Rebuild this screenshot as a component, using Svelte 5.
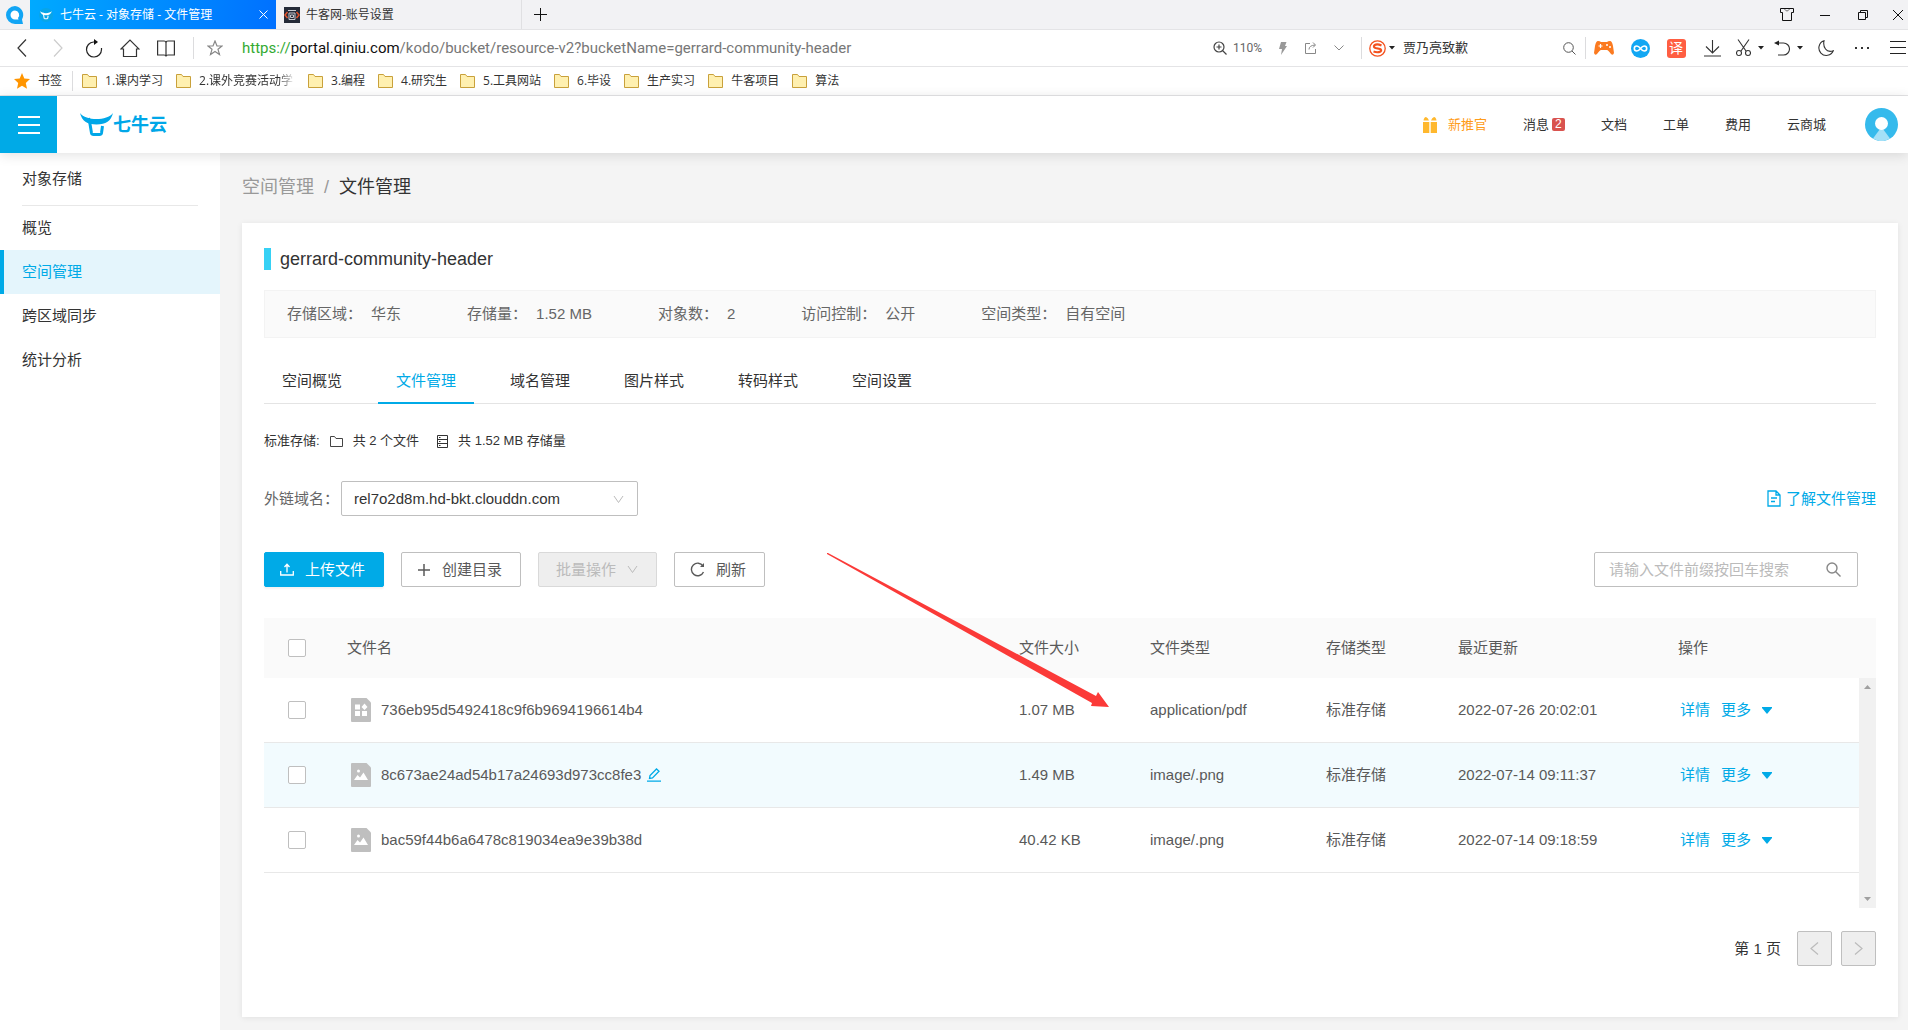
<script lang="ts">
  type StoredFile = {
    name : string
    size : string
    mime : string
    storage : string
    updated : string
    kind : "app" | "image"
    hovered? : boolean
  }


  const bookmarks = [
    "1.课内学习",
    "2.课外竞赛活动学",
    "3.编程",
    "4.研究生",
    "5.工具网站",
    "6.毕设",
    "生产实习",
    "牛客项目",
    "算法",
  ]

  const menu = ["概览", "空间管理", "跨区域同步", "统计分析"]

  const facts = [
    { label: "存储区域：", value: "华东" },
    { label: "存储量：", value: "1.52 MB" },
    { label: "对象数：", value: "2" },
    { label: "访问控制：", value: "公开" },
    { label: "空间类型：", value: "自有空间" },
  ]

  const tabs = ["空间概览", "文件管理", "域名管理", "图片样式", "转码样式", "空间设置"]

  const files : StoredFile[] = [
    { name: "736eb95d5492418c9f6b9694196614b4", size: "1.07 MB", mime: "application/pdf", storage: "标准存储", updated: "2022-07-26 20:02:01", kind: "app" },
    { name: "8c673ae24ad54b17a24693d973cc8fe3", size: "1.49 MB", mime: "image/.png", storage: "标准存储", updated: "2022-07-14 09:11:37", kind: "image", hovered: true },
    { name: "bac59f44b6a6478c819034ea9e39b38d", size: "40.42 KB", mime: "image/.png", storage: "标准存储", updated: "2022-07-14 09:18:59", kind: "image" },
  ]


  let active_menu = "空间管理"

  let active_tab = "文件管理"

  let selected : string[] = []

  let keyword = "贾乃亮致歉"

  let prefix = ""

  $: all_selected = selected.length === files.length


  function toggle_all() : void {
    selected = all_selected ? [] : files.map(f => f.name)
  }
</script>


{#snippet bull()}
  <path d="M0 0C6 8 27 8 33 0C31 8 26 11.500 16.500 11.500S2 8 0 0z" fill="currentColor" />
  <path d="M8.500 5l1.500 6 1.500 9q.3 1.500 2 1.500h6q1.700 0 2-1.500l1-7" fill="none" stroke="currentColor" stroke-width="3" />
{/snippet}

{#snippet caret()}
  <svg class="caret" width="6" height="4" viewBox="0 0 6 4"><path d="M0 0h6L3 3.500z" fill="#222" /></svg>
{/snippet}

{#snippet chevron()}
  <svg width="11" height="9" viewBox="0 0 11 9" fill="none" stroke="currentColor"><path d="M1 1l4.500 6.500L10 1" /></svg>
{/snippet}

{#snippet columns()}
  <colgroup>
    <col class="col-check" />
    <col />
    <col class="col-size" />
    <col class="col-mime" />
    <col class="col-storage" />
    <col class="col-updated" />
    <col class="col-actions" />
  </colgroup>
{/snippet}


<div class="window">
  <div class="tabstrip">
    <span class="browser-logo">
      <svg width="18" height="18" viewBox="0 0 18 18">
        <path d="M9 0a9 9 0 1 0 0 18h8l-1-4.500A9 9 0 0 0 9 0z" fill="#12a5f4" />
        <path d="M9 4.500a4.500 4.500 0 1 0 0 9h3.500l-.5-1.500A4.500 4.500 0 0 0 9 4.500z" fill="#fff" />
      </svg>
    </span>
    <div class="page-tab current">
      <svg width="14" height="14" viewBox="0 0 14 14">
        <circle cx="7" cy="7" r="7" fill="#08a5e8" />
        <g transform="translate(1 3) scale(.36)">{@render bull()}</g>
      </svg>
      <span>七牛云 - 对象存储 - 文件管理</span>
      <button aria-label="关闭标签页">
        <svg width="9" height="9" viewBox="0 0 9 9" stroke="#fff"><path d="M.5.5l8 8M8.500.5l-8 8" /></svg>
      </button>
    </div>
    <div class="page-tab">
      <svg width="16" height="16" viewBox="0 0 16 16" fill="none">
        <path d="M0 0h16v16H0z" fill="#252b38" />
        <path d="M4 3.500h8M5 6h6v6.500H5zM6.500 8h3v2.500h-3z" stroke="#c9cbd0" />
        <path d="M3.500 5L1 8l2.500 3M12.500 5L15 8l-2.500 3" stroke="#e2532c" stroke-width="1.500" />
      </svg>
      <span>牛客网-账号设置</span>
    </div>
    <button class="new-tab" aria-label="新建标签页">
      <svg width="13" height="13" viewBox="0 0 13 13" stroke="#111"><path d="M0 6.500h13M6.500 0v13" /></svg>
    </button>
    <div class="window-controls">
      <button aria-label="皮肤">
        <svg width="14" height="13" viewBox="0 0 14 13" fill="none" stroke="#111">
          <path d="M.5.5h13v4h-2v8h-9v-8h-2z" /><path d="M4.500 1q2.500 4 5 0" stroke="#777" />
        </svg>
      </button>
      <button aria-label="最小化">
        <svg width="10" height="10" viewBox="0 0 10 10" stroke="#111"><path d="M0 5.500h10" /></svg>
      </button>
      <button aria-label="还原">
        <svg width="10" height="10" viewBox="0 0 10 10" fill="none" stroke="#111"><path d="M.5 2.500h7v7h-7zM2.500 2.500v-2h7v7h-2" /></svg>
      </button>
      <button aria-label="关闭窗口">
        <svg width="10" height="10" viewBox="0 0 10 10" stroke="#111"><path d="M0 0l10 10M10 0L0 10" /></svg>
      </button>
    </div>
  </div>

  <div class="addressbar">
    <div class="nav-buttons">
      <button aria-label="后退">
        <svg width="10" height="18" viewBox="0 0 10 18" fill="none" stroke="#333" stroke-width="1.200"><path d="M9 .5L1 9l8 8.500" /></svg>
      </button>
      <button aria-label="前进">
        <svg width="10" height="18" viewBox="0 0 10 18" fill="none" stroke="#ccc" stroke-width="1.200"><path d="M1 .5L9 9l-8 8.500" /></svg>
      </button>
      <button aria-label="刷新页面">
        <svg width="18" height="19" viewBox="0 0 18 19" fill="none" stroke="#222" stroke-width="1.200">
          <path d="M10 3H8.500a7.500 7.500 0 1 0 8 7.500V9" /><path d="M9 0l4 3-4 3z" fill="#111" stroke="none" />
        </svg>
      </button>
      <button aria-label="主页">
        <svg width="20" height="18" viewBox="0 0 20 18" fill="none" stroke="#333" stroke-width="1.200"><path d="M1 10l9-9 9 9h-2.500v7.500h-13V10z" /></svg>
      </button>
      <button aria-label="阅读">
        <svg width="18" height="17" viewBox="0 0 18 17" fill="none" stroke="#333" stroke-width="1.200"><path d="M.6 1H7q2 0 2 2 0-2 2-2h6.400v14H11q-2 0-2 1.500 0-1.500-2-1.500H.6zM9 3v13" /></svg>
      </button>
    </div>
    <i class="rule"></i>
    <button class="favorite" aria-label="收藏">
      <svg width="16" height="16" viewBox="0 0 16 16" fill="none" stroke="#888" stroke-width="1.200"><path d="M8 1l2 5h5l-4 3.300 1.500 5.200L8 11.500l-4.500 3L5 9.300 1 6h5z" /></svg>
    </button>
    <div class="url" role="textbox" tabindex="0" contenteditable="true" aria-label="地址"><span class="scheme">https://</span><span class="host">portal.qiniu.com</span>/kodo/bucket/resource-v2?bucketName=gerrard-community-header</div>
    <button class="zoom">
      <svg width="14" height="14" viewBox="0 0 14 14" fill="none" stroke="#444" stroke-width="1.200"><circle cx="6" cy="6" r="5" /><path d="M9.500 9.500l4 4M3.500 6h5M6 3.500v5" /></svg>
      110%
    </button>
    <div class="page-actions">
      <button aria-label="极速模式">
        <svg width="8" height="13" viewBox="0 0 8 13"><path d="M2 0h5.500L6 4h2L2 13l1-6H0z" fill="#999" /></svg>
      </button>
      <button aria-label="分享">
        <svg width="12" height="12" viewBox="0 0 12 12" fill="none" stroke="#888"><path d="M5 1.500H.5v10h10V7M4 7.500q0-4 6-4.500M8 .5L10.500 3 8 5.500" /></svg>
      </button>
      <button aria-label="展开">
        <svg width="10" height="6" viewBox="0 0 10 6" fill="none" stroke="#888"><path d="M.5.5L5 5 9.500.5" /></svg>
      </button>
    </div>
    <i class="rule"></i>
    <button class="engine" aria-label="搜索引擎">
      <svg width="17" height="17" viewBox="0 0 17 17" fill="none" stroke="#f4511e"><circle cx="8.500" cy="8.500" r="7.700" stroke-width="1.300" /><path d="M12.500 5.500Q8 3.500 5.500 5.200 4 7 6.500 8L11 9q2 1 .5 2.500-3 1.500-7 0" stroke-width="2.200" /></svg>
      {@render caret()}
    </button>
    <input class="engine-query" aria-label="网页搜索" bind:value={keyword} />
    <button class="engine-go" aria-label="搜索网页">
      <svg width="13" height="13" viewBox="0 0 13 13" fill="none" stroke="#555"><circle cx="5.500" cy="5.500" r="4.800" /><path d="M9 9l3.500 3.500" /></svg>
    </button>
    <i class="rule"></i>
    <div class="extensions">
      <button aria-label="游戏">
        <svg width="20" height="14" viewBox="0 0 20 14">
          <path d="M4 0q2 0 3 1h6q1-1 3-1 2 0 3 5l1 7q-1 3-3 1-3-4-4-4H7q-1 0-4 4-2 2-3-1l1-7Q2 0 4 0z" fill="#fb7a20" />
          <path d="M6.500 3v4M4.500 5h4" stroke="#fff" stroke-width="1.200" /><circle cx="13" cy="4" r="1" fill="#fff" /><circle cx="16" cy="6" r="1" fill="#fff" />
        </svg>
      </button>
      <button aria-label="网盘">
        <svg width="19" height="19" viewBox="0 0 19 19"><circle cx="9.500" cy="9.500" r="9.500" fill="#12a7f3" /><path d="M9.500 9.500Q7.500 7 5.800 7a2.500 2.500 0 0 0 0 5Q7.500 12 9.500 9.500T13.200 7a2.500 2.500 0 0 1 0 5Q11.500 12 9.500 9.500z" fill="none" stroke="#fff" stroke-width="1.600" /></svg>
      </button>
      <button aria-label="翻译"><span class="translate">译</span></button>
      <button aria-label="下载">
        <svg width="17" height="17" viewBox="0 0 17 17" fill="none" stroke="#333" stroke-width="1.100"><path d="M8.500 0v12.500M2 6.500l6.500 6.500L15 6.500M0 16h17" /></svg>
      </button>
      <button class="wide" aria-label="截图">
        <svg width="15" height="18" viewBox="0 0 15 18" fill="none" stroke="#333" stroke-width="1.100"><path d="M2 .5l8 11.500M13 .5L5 12" /><circle cx="3" cy="14" r="2.500" /><circle cx="12" cy="14" r="2.500" /></svg>
        {@render caret()}
      </button>
      <button class="wide" aria-label="撤销">
        <svg width="16" height="16" viewBox="0 0 16 16" fill="none" stroke="#333" stroke-width="1.100"><path d="M2 3h7.500a6 6 0 0 1 0 12H4" /><path d="M0 3l5-2.500v5z" fill="#222" stroke="none" /></svg>
        {@render caret()}
      </button>
      <button aria-label="夜间模式">
        <svg width="16" height="16" viewBox="0 0 16 16" fill="none" stroke="#333" stroke-width="1.100"><path d="M6 .8a7.500 7.500 0 1 0 9.300 10Q10 12.500 7.500 9T6 .8z" /></svg>
      </button>
      <button aria-label="更多工具">
        <svg width="15" height="3" viewBox="0 0 15 3" fill="#333"><path d="M0 0h2v2H0zM6 0h2v2H6zM12 0h2v2h-2z" /></svg>
      </button>
      <button class="last" aria-label="菜单">
        <svg width="18" height="14" viewBox="0 0 18 14" stroke="#222"><path d="M0 .5h16M0 6.500h16M0 12.500h16" /></svg>
      </button>
    </div>
  </div>

  <nav class="bookmarks" aria-label="书签栏">
    <button class="bookmark-root">
      <svg width="16" height="16" viewBox="0 0 16 16" fill="#ff9500"><path d="M8 0l2.300 5.400L16 6l-4.200 3.900L13 15.700l-5-3-5 3 1.200-5.800L0 6l5.700-.6z" /></svg>
      书签
    </button>
    {#each bookmarks as bookmark (bookmark)}
      <button>
        <svg width="15" height="14" viewBox="0 0 15 14"><path d="M.5.500h5l1.500 2h7.500v11H.5z" fill="#fff0b0" stroke="#c9a13b" /></svg>
        <span class:faded={bookmark.length > 8}>{bookmark}</span>
      </button>
    {/each}
  </nav>

  <header>
    <button class="hamburger" aria-label="产品菜单">
      <svg width="22" height="20" viewBox="0 0 22 20" stroke="#fff" stroke-width="2"><path d="M0 2h22M0 10h22M0 18h22" /></svg>
    </button>
    <a class="brand" href="#home">
      <svg width="33" height="23" viewBox="0 0 33 23">{@render bull()}</svg>
      <span>七牛云</span>
    </a>
    <nav class="account" aria-label="账户">
      <a class="promo" href="#promo">
        <svg width="14" height="16" viewBox="0 0 14 16" fill="#ffb82e"><path d="M0 5h6.300v11H0zM7.700 5H14v11H7.700zM.5 3.500Q1 0 3 0q2 .5 3 3.500zM13.500 3.500Q13 0 11 0 9 .5 8 3.500z" /></svg>
        新推官
      </a>
      <a href="#messages">消息<b>2</b></a>
      <a href="#docs">文档</a>
      <a href="#tickets">工单</a>
      <a href="#billing">费用</a>
      <a href="#market">云商城</a>
      <button aria-label="个人中心">
        <svg width="33" height="33" viewBox="0 0 33 33">
          <circle cx="16.500" cy="16.500" r="16.500" fill="#35baec" />
          <path d="M16.500 19L8 30.600a16.500 16.500 0 0 0 17 0z" fill="#a4e0f7" />
          <circle cx="16.500" cy="15.500" r="6.500" fill="#fff" />
        </svg>
      </button>
    </nav>
  </header>

  <div class="console">
    <aside>
      <h2>对象存储</h2>
      <nav aria-label="对象存储">
        {#each menu as item (item)}
          <button class:active={item === active_menu} on:click={() => active_menu = item}>{item}</button>
        {/each}
      </nav>
    </aside>

    <main>
      <nav class="breadcrumb" aria-label="路径">
        <a href="#buckets">空间管理</a>
        <span>/</span>
        <strong>文件管理</strong>
      </nav>

      <section class="card">
        <h1>gerrard-community-header</h1>

        <dl class="facts">
          {#each facts as fact (fact.label)}
            <div><dt>{fact.label}</dt><dd>{fact.value}</dd></div>
          {/each}
        </dl>

        <div class="tabs" role="tablist">
          {#each tabs as tab (tab)}
            <button role="tab" aria-selected={tab === active_tab} class:active={tab === active_tab} on:click={() => active_tab = tab}>{tab}</button>
          {/each}
        </div>

        <div class="usage">
          <span>标准存储:</span>
          <svg width="13" height="11" viewBox="0 0 13 11" fill="none" stroke="#444"><path d="M.5.500h4l1.500 2h6.500v8H.5z" /></svg>
          <span class="count">共 2 个文件</span>
          <svg width="11" height="13" viewBox="0 0 11 13" fill="none" stroke="#333"><path d="M.5.500h10v12H.5zM.5 4.500h10M.5 8.500h10" /><path d="M2 2.500h1.500M2 6.500h1.500M2 10.500h1.500" /></svg>
          <span>共 1.52 MB 存储量</span>
        </div>

        <div class="domain">
          <label for="domain">外链域名：</label>
          <div class="select">
            <select id="domain">
              <option>rel7o2d8m.hd-bkt.clouddn.com</option>
            </select>
            {@render chevron()}
          </div>
          <a href="#help">
            <svg width="14" height="17" viewBox="0 0 14 17" fill="none" stroke="currentColor" stroke-width="1.300"><path d="M1 1h8l4 4v11H1zM9 1v4h4M4 8h6M4 11.500h4" /></svg>
            了解文件管理
          </a>
        </div>

        <div class="toolbar">
          <button class="primary">
            <svg width="14" height="13" viewBox="0 0 14 13" fill="none" stroke="currentColor" stroke-width="1.300"><path d="M.7 8v4h12.600V8M7 9.500v-8M4.500 4L7 1.200 9.500 4" /></svg>
            上传文件
          </button>
          <button>
            <svg class="plus" width="12" height="12" viewBox="0 0 12 12" stroke="currentColor" stroke-width="1.500"><path d="M0 6h12M6 0v12" /></svg>
            创建目录
          </button>
          <button disabled>
            批量操作
            {@render chevron()}
          </button>
          <button>
            <svg width="15" height="15" viewBox="0 0 15 15" fill="none" stroke="currentColor" stroke-width="1.400"><path d="M13 4a6.300 6.300 0 1 0 .5 6" /><path d="M14 1v4h-4z" fill="currentColor" stroke="none" /></svg>
            刷新
          </button>
          <div class="search">
            <input type="text" aria-label="文件前缀" placeholder="请输入文件前缀按回车搜索" bind:value={prefix} />
            <button aria-label="搜索">
              <svg width="15" height="15" viewBox="0 0 15 15" fill="none" stroke="#888" stroke-width="1.400"><circle cx="6" cy="6" r="5" /><path d="M9.500 9.500l5 5" /></svg>
            </button>
          </div>
        </div>

        <div class="table-head">
          <table>
            {@render columns()}
            <thead>
              <tr>
                <th><input type="checkbox" aria-label="全选" checked={all_selected} on:change={toggle_all} /></th>
                <th>文件名</th>
                <th>文件大小</th>
                <th>文件类型</th>
                <th>存储类型</th>
                <th>最近更新</th>
                <th>操作</th>
              </tr>
            </thead>
          </table>
        </div>
        <div class="table-body">
          <table>
            {@render columns()}
            <tbody>
              {#each files as file (file.name)}
                <tr class:hovered={file.hovered}>
                  <td><input type="checkbox" aria-label={file.name} value={file.name} bind:group={selected} /></td>
                  <td>
                    <div class="file">
                      <svg width="20" height="24" viewBox="0 0 20 24">
                        <path d="M1 0h14.500L20 4.500V23q0 1-1 1H1q-1 0-1-1V1q0-1 1-1z" fill="#bfbfbf" />
                        {#if file.kind === "app"}
                          <path d="M4 6.500h5v5H4zM4 13h5v5H4zM11 13h5v5h-5zM13.500 5.500L16.500 9l-3 3-3-3z" fill="#fff" />
                        {:else}
                          <path d="M3 17l3.500-5 2.500 2.500 3.500-5L17 17z" fill="#fff" /><circle cx="7.500" cy="8" r="1.500" fill="#fff" />
                        {/if}
                      </svg>
                      <span>{file.name}</span>
                      {#if file.hovered}
                        <button aria-label="重命名">
                          <svg width="14" height="14" viewBox="0 0 14 14" fill="none" stroke="#00aae7" stroke-width="1.300"><path d="M0 13.200h14M2.500 10.500l.5-3L9.500 1 12 3.200 5.500 10z" /></svg>
                        </button>
                      {/if}
                    </div>
                  </td>
                  <td>{file.size}</td>
                  <td>{file.mime}</td>
                  <td>{file.storage}</td>
                  <td>{file.updated}</td>
                  <td>
                    <div class="actions">
                      <a href="#detail">详情</a>
                      <button>
                        更多
                        <svg width="10" height="7" viewBox="0 0 10 7" fill="currentColor"><path d="M0 0h10v1L5 7 0 1z" /></svg>
                      </button>
                    </div>
                  </td>
                </tr>
              {/each}
            </tbody>
          </table>
          <div class="scrollbar">
            <svg width="7" height="4" viewBox="0 0 7 4" fill="#a0a0a0"><path d="M0 4h7L3.500 0z" /></svg>
            <svg width="7" height="4" viewBox="0 0 7 4" fill="#a0a0a0"><path d="M0 0h7L3.500 4z" /></svg>
          </div>
        </div>

        <div class="pagination">
          <span>第 1 页</span>
          <button disabled aria-label="上一页">
            <svg width="9" height="13" viewBox="0 0 9 13" fill="none" stroke="currentColor" stroke-width="1.200"><path d="M8 .5L1 6.500l7 6" /></svg>
          </button>
          <button disabled aria-label="下一页">
            <svg width="9" height="13" viewBox="0 0 9 13" fill="none" stroke="currentColor" stroke-width="1.200"><path d="M1 .5l7 6-7 6" /></svg>
          </button>
        </div>

        <!-- red marker drawn over the list, pointing at the first row -->
        <svg class="marker" width="282" height="155" viewBox="0 0 282 155" aria-hidden="true">
          <path d="M0 0L1 0L269 143l2-4 11 15-18-1 1-3L0 1z" fill="#fb3a38" />
        </svg>
      </section>
    </main>
  </div>
</div>


<style>
  :global(body) {
    background: #f4f4f4;
  }


  .window {
    min-height: 100vh;
    display: flex;
    flex-direction: column;
    font-family: "Liberation Sans", "Noto Sans CJK SC", sans-serif;
    font-size: 15px;
    line-height: 20px;
    color: #333;
  }


  button {
    font: inherit;
    color: inherit;
    background: none;
    border: 0;
    padding: 0;
    display: flex;
    align-items: center;
    justify-content: center;
    white-space: nowrap;
  }


  a {
    color: inherit;
    text-decoration: none;
    white-space: nowrap;
  }


  svg {
    flex: none;
    display: block;
  }


  .tabstrip,
  .addressbar,
  .bookmarks {
    display: flex;
    box-sizing: border-box;
    border-bottom: 1px solid #e4e4e6;
    font-family: "Open Sans", "Noto Sans CJK SC", sans-serif;
    font-size: 12px;
  }


  .tabstrip {
    height: 30px;
    background: #f2f2f4;
  }


  .browser-logo {
    width: 30px;
    display: flex;
    align-items: center;
    justify-content: center;
  }


  .page-tab {
    width: 246px;
    box-sizing: border-box;
    padding: 0 8px;
    display: flex;
    align-items: center;
    gap: 6px;
    border-right: 1px solid #e0e0e2;
  }


  .page-tab.current {
    padding: 0 8px 0 9px;
    gap: 7px;
    color: #fff;
    background: linear-gradient(100deg, #00aaff, #0070ff);
    border-right: 0;
  }


  .page-tab span {
    flex: 1;
    white-space: nowrap;
  }


  .new-tab {
    width: 36px;
  }


  .window-controls {
    margin-left: auto;
    display: flex;
    overflow: hidden;
  }


  .window-controls button {
    width: 38px;
  }


  .window-controls button:last-child {
    width: 26px;
    padding-left: 6px;
  }


  .addressbar {
    height: 37px;
    align-items: center;
    background: #fff;
    font-family: Roboto, "Noto Sans CJK SC", sans-serif;
  }


  .nav-buttons {
    display: flex;
    margin: 0 9px 0 4px;
  }


  .nav-buttons button,
  .extensions button {
    width: 36px;
    height: 36px;
  }


  .rule {
    width: 1px;
    height: 22px;
    background: #dcdcde;
  }


  .favorite {
    width: 42px;
    height: 36px;
  }


  .url {
    flex: 1;
    margin-left: 6px;
    font-size: 15px;
    color: #777;
    white-space: nowrap;
    outline: none;
  }


  .scheme {
    color: #3a3;
  }


  .host {
    color: #111;
  }


  .zoom {
    gap: 6px;
    color: #666;
  }


  .page-actions {
    display: flex;
    margin: 0 8px 0 7px;
  }


  .page-actions button {
    width: 28px;
    height: 36px;
  }


  .engine {
    gap: 3px;
    margin: 0 8px 0 7px;
  }


  .engine-query {
    width: 150px;
    padding: 0;
    border: 0;
    outline: 0;
    color: #333;
    font: inherit;
    font-size: 13px;
  }


  .engine-go {
    width: 32px;
    height: 36px;
  }


  .extensions {
    display: flex;
  }


  .extensions button.wide {
    width: 39px;
    gap: 7px;
  }


  .extensions button.last {
    width: 28px;
    justify-content: flex-end;
  }


  .translate {
    width: 19px;
    height: 19px;
    border-radius: 3px;
    background: #ff5e42;
    color: #fff;
    font-size: 14px;
    line-height: 19px;
    text-align: center;
  }


  .bookmarks {
    height: 29px;
    align-items: center;
    gap: 13px;
    background: #fff;
  }


  .bookmarks button {
    gap: 8px;
  }


  .bookmarks .bookmark-root {
    padding: 0 10px 0 14px;
    margin-right: -4px;
    border-right: 1px solid #dcdcde;
  }


  .faded {
    padding-right: 2px;
    mask-image: linear-gradient(to right, #000 80px, transparent);
  }


  header {
    position: relative;
    z-index: 1;
    height: 57px;
    display: flex;
    align-items: center;
    background: #fff;
    box-shadow: 0 2px 12px rgba(0, 0, 0, 0.12);
  }


  .hamburger {
    width: 57px;
    align-self: stretch;
    background: #00aae7;
  }


  .brand {
    display: flex;
    align-items: center;
    margin-left: 23px;
    color: #00a7e8;
    font-size: 18px;
    font-weight: 700;
  }


  .account {
    margin-left: auto;
    padding-right: 10px;
    display: flex;
    align-items: center;
    gap: 36px;
    font-size: 13px;
  }


  .account a {
    display: flex;
    align-items: center;
  }


  .account .promo {
    gap: 11px;
    color: #ff9c1a;
  }


  .account b {
    width: 13px;
    height: 13px;
    margin-left: 3px;
    border-radius: 2px;
    background: #d9534f;
    color: #fff;
    font-size: 12px;
    font-weight: 400;
    line-height: 13px;
    text-align: center;
  }


  .account button {
    margin-left: 3px;
  }


  .console {
    flex: 1;
    display: flex;
  }


  aside {
    width: 220px;
    flex: none;
    background: #fff;
  }


  aside h2 {
    height: 52px;
    margin: 0 22px;
    border-bottom: 1px solid #e8e8e8;
    font-size: 15px;
    font-weight: 400;
    line-height: 52px;
  }


  aside button {
    width: 100%;
    height: 44px;
    padding-left: 18px;
    border-left: 4px solid transparent;
    justify-content: flex-start;
  }


  aside button.active {
    color: #00aae7;
    background: #e4f5fc;
    border-color: #00aae7;
  }


  main {
    flex: 1;
    min-width: 0;
    padding: 20px 10px 12px 22px;
  }


  .breadcrumb {
    display: flex;
    gap: 10px;
    margin-bottom: 22px;
    font-size: 18px;
    line-height: 28px;
    color: #999;
  }


  .breadcrumb strong {
    font-weight: 400;
    color: #333;
  }


  .card {
    position: relative;
    padding: 25px 22px 51px;
    background: #fff;
    box-shadow: 0 1px 6px rgba(0, 0, 0, 0.08);
  }


  h1 {
    margin: 0;
    padding-left: 9px;
    border-left: 7px solid #36d1f5;
    font-size: 18px;
    font-weight: 400;
    line-height: 22px;
  }


  .facts {
    height: 46px;
    margin: 20px 0;
    padding-left: 22px;
    display: flex;
    align-items: center;
    gap: 66px;
    border: 1px solid #f3f3f3;
    background: #fafafa;
    color: #666;
  }


  .facts div {
    display: flex;
    gap: 9px;
  }


  .facts dd {
    margin: 0;
  }


  .tabs {
    display: flex;
    gap: 18px;
    height: 46px;
    box-shadow: inset 0 -1px #e4e4e4;
  }


  .tabs button {
    padding: 0 18px;
  }


  .tabs .active {
    color: #00aae7;
    box-shadow: inset 0 -2px #00aae7;
  }


  .usage {
    margin: 27px 0 30px;
    display: flex;
    align-items: center;
    font-size: 13px;
    line-height: 20px;
  }


  .usage svg {
    margin: 0 10px;
  }


  .usage .count {
    margin-right: 8px;
  }


  .domain {
    display: flex;
    align-items: center;
    color: #666;
  }


  .select {
    width: 297px;
    margin-left: 2px;
    position: relative;
    color: #bbb;
  }


  .select svg {
    position: absolute;
    right: 14px;
    top: 14px;
    pointer-events: none;
  }


  select {
    appearance: none;
    display: block;
    width: 100%;
    height: 35px;
    padding: 0 12px;
    border: 1px solid #bfbfbf;
    border-radius: 2px;
    background: #fff;
    color: #333;
    font: inherit;
  }


  .domain a {
    margin-left: auto;
    display: flex;
    align-items: center;
    gap: 5px;
    color: #00aae7;
  }


  .toolbar {
    display: flex;
    gap: 17px;
    margin: 36px 0 31px;
  }


  .toolbar > button {
    height: 35px;
    box-sizing: border-box;
    padding: 0 18px 0 15px;
    gap: 11px;
    border: 1px solid #bfbfbf;
    border-radius: 2px;
    color: #595959;
  }


  .toolbar > .primary {
    border-color: #00aae7;
    background: #00aae7;
    color: #fff;
    box-shadow: 0 2px 2px rgba(0, 0, 0, 0.05);
  }


  .plus {
    padding: 0 1px;
  }


  .toolbar > button:disabled {
    padding: 0 18px 0 17px;
    border-color: #d9d9d9;
    background: #eee;
    color: #bbb;
  }


  .search {
    width: 264px;
    height: 35px;
    margin: 0 18px 0 auto;
    box-sizing: border-box;
    display: flex;
    border: 1px solid #bfbfbf;
    border-radius: 2px;
  }


  .search input {
    flex: 1;
    min-width: 0;
    padding: 0 0 0 14px;
    border: 0;
    outline: 0;
    background: none;
    font: inherit;
  }


  .search input::placeholder {
    color: #bbb;
  }


  .search button {
    width: 48px;
  }


  .table-head {
    padding-right: 17px;
    background: #fafafa;
  }


  .table-body {
    display: flex;
    align-items: flex-start;
    min-height: 230px;
  }


  table {
    width: 100%;
    border-collapse: separate;
    border-spacing: 0;
    table-layout: fixed;
    color: #595959;
  }


  .col-check {
    width: 83px;
  }


  .col-size {
    width: 131px;
  }


  .col-mime {
    width: 176px;
  }


  .col-storage {
    width: 132px;
  }


  .col-updated {
    width: 220px;
  }


  .col-actions {
    width: 181px;
  }


  th,
  td {
    padding: 0;
    text-align: left;
    font-weight: 400;
    white-space: nowrap;
  }


  th {
    height: 60px;
  }


  td {
    height: 64px;
    border-bottom: 1px solid #e8e8e8;
  }


  .hovered td {
    background: #f2fbfe;
  }


  input[type="checkbox"] {
    appearance: none;
    display: block;
    width: 18px;
    height: 18px;
    margin: 0 0 0 24px;
    border: 1px solid #bfbfbf;
    border-radius: 2px;
    background: #fff;
  }


  input[type="checkbox"]:checked {
    border-color: #00aae7;
    background: #00aae7;
  }


  .file {
    display: flex;
    align-items: center;
    gap: 10px;
    padding-left: 4px;
  }


  .file button {
    margin-left: -4px;
  }


  .actions {
    display: flex;
    gap: 11px;
    padding-left: 2px;
    color: #00aae7;
  }


  .actions button {
    gap: 11px;
  }


  .scrollbar {
    width: 17px;
    flex: none;
    align-self: stretch;
    box-sizing: border-box;
    padding: 7px 0;
    display: flex;
    flex-direction: column;
    align-items: center;
    justify-content: space-between;
    background: #f1f1f1;
  }


  .pagination {
    display: flex;
    align-items: center;
    justify-content: flex-end;
    gap: 9px;
    margin-top: 23px;
  }


  .pagination span {
    margin-right: 7px;
  }


  .pagination button {
    width: 35px;
    height: 35px;
    border: 1px solid #bfbfbf;
    border-radius: 2px;
    background: #eee;
    color: #bbb;
  }


  .marker {
    position: absolute;
    left: 585px;
    top: 330px;
    pointer-events: none;
  }
</style>
